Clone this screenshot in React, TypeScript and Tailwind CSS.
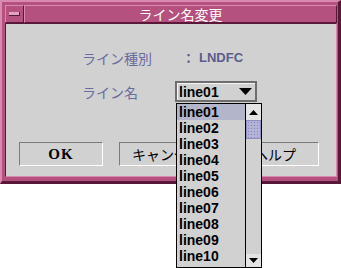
import React from 'react'

const items = ['line01', 'line02', 'line03', 'line04', 'line05', 'line06', 'line07', 'line08', 'line09', 'line10']

const jp = { fontFamily: '"Noto Sans CJK JP", "Liberation Sans", sans-serif' }
const latin = { fontFamily: '"Liberation Sans", Arial, sans-serif' }

function Button({ label, width, serif }: { label: string; width: string; serif?: boolean }) {
  return (
    <div
      className={`${width} h-[24px] flex items-center justify-center border border-t-[#7c7c7c] border-l-[#7c7c7c] border-b-white border-r-white text-black`}
      style={serif ? { fontFamily: '"Liberation Serif", "Times New Roman", serif' } : jp}
    >
      <span className={serif ? 'text-[15px] font-bold leading-none tracking-[1px]' : 'text-[14px] leading-none'}>{label}</span>
    </div>
  )
}

export default function App() {
  return (
    <div className="relative w-[341px] h-[268px] bg-white overflow-hidden">
      {/* window frame */}
      <div className="w-[341px] h-[184px] bg-[#b4517e] border-t-2 border-l-2 border-[#d98aae] border-b-[3px] border-r-[3px] border-b-[#5a1838] border-r-[#5a1838] pt-[3px] pl-[3px] pr-[1px] pb-[4px] flex flex-col">
        {/* title bar */}
        <div className="flex h-[18px]">
          <div className="w-[19px] h-[18px] border border-t-[#d98aae] border-l-[#d98aae] border-b-[#5a1838] border-r-[#5a1838] flex items-center justify-center">
            <div className="w-[11px] h-[4px] bg-[#e2a3bf] border-b border-r border-[#5a1838]" />
          </div>
          <div className="flex-1 h-[18px] border border-t-[#d98aae] border-l-[#d98aae] border-b-[#5a1838] border-r-[#5a1838] flex items-center justify-center">
            <span className="text-white text-[14px] leading-none" style={jp}>ライン名変更</span>
          </div>
        </div>

        {/* content */}
        <div className="flex-1 bg-[#d1d1d1] border border-t-[#5a1838] border-l-[#5a1838] border-b-[#d98aae] border-r-[#d98aae] flex flex-col">
          <div className="flex items-center h-[16px] mt-[26px] ml-[76px]">
            <span className="w-[93px] text-[14px] leading-none text-[#6b6b9e]" style={jp}>ライン種別</span>
            <span className="ml-[7px] text-[13px] font-bold text-[#5c5c8e]" style={jp}>：</span>
            <span className="ml-[4px] text-[13px] font-bold text-[#5c5c8e]" style={latin}>LNDFC</span>
          </div>
          <div className="flex items-center h-[21px] mt-[15px] ml-[76px]">
            <span className="w-[93px] text-[14px] leading-none text-[#6b6b9e]" style={jp}>ライン名</span>
            <div className="w-[82px] h-[21px] border-2 border-[#6e6e6e] flex items-center pl-[2px] pr-[3px] shadow-[inset_1px_1px_0_#f4f4f4]">
              <span className="flex-1 text-[14px] font-bold text-black leading-none" style={latin}>line01</span>
              <svg width="13" height="7" viewBox="0 0 13 7">
                <polygon points="0,0 13,0 6.5,7" fill="#000" />
              </svg>
            </div>
          </div>
          <div className="flex gap-4 mt-[40px] ml-[13px]">
            <Button label="OK" width="w-[84px]" serif />
            <Button label="キャンセル" width="w-[96px]" />
            <Button label="ヘルプ" width="w-[88px]" />
          </div>
        </div>
      </div>

      {/* open drop-down list */}
      <div className="absolute left-[176px] top-[103px] w-[86px] h-[165px] border border-black bg-[#d1d1d1] flex">
        <div className="w-[68px] flex flex-col">
          {items.map((it, i) => (
            <div
              key={it}
              className={`h-[16px] flex items-center pl-[2px] text-[14px] font-bold text-black leading-none ${i === 0 ? 'bg-[#b3b5ca]' : ''}`}
              style={latin}
            >
              {it}
            </div>
          ))}
        </div>
        <div className="flex-1 border-l border-black flex flex-col">
          <div className="h-[16px] bg-[#e4e4e4] flex items-center justify-center">
            <svg width="9" height="5" viewBox="0 0 9 5">
              <polygon points="0,5 9,5 4.5,0" fill="#000" />
            </svg>
          </div>
          <div className="h-[19px] border border-[#8d8dc2] bg-[#b2b3d6] bg-[radial-gradient(#8686bc_0.8px,transparent_0.8px)] bg-[length:3px_3px]" />
          <div className="flex-1" />
          <div className="h-[13px] bg-[#e4e4e4] flex items-center justify-center">
            <svg width="9" height="5" viewBox="0 0 9 5">
              <polygon points="0,0 9,0 4.5,5" fill="#000" />
            </svg>
          </div>
        </div>
      </div>
    </div>
  )
}
